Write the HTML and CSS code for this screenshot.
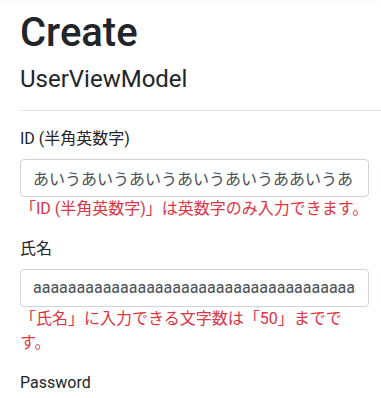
FILE: index.html
```html
<!DOCTYPE html>
<html lang="ja">
<head>
  <meta charset="UTF-8" />
  <meta name="viewport" content="width=device-width, initial-scale=1.0" />
  <title>Create - UserViewModel</title>
  <link rel="stylesheet" href="styles.css">
</head>
<body>

<div class="nav-shadow"></div>

<main class="container">
  <h1>Create</h1>
  <h4>UserViewModel</h4>
  <hr />

  <form class="user-form">
    <div class="form-group">
      <label class="control-label" for="UserId">ID (半角英数字)</label>
      <input class="form-control" id="UserId" type="text" value="あいうあいうあいうあいうあいうああいうあ" />
      <span class="text-danger">「ID (半角英数字)」は英数字のみ入力できます。</span>
    </div>

    <div class="form-group">
      <label class="control-label" for="Name">氏名</label>
      <input class="form-control" id="Name" type="text" value="aaaaaaaaaaaaaaaaaaaaaaaaaaaaaaaaaaaaaaaaaaaaaaaaaaaa" />
      <span class="text-danger">「氏名」に入力できる文字数は「50」までです。</span>
    </div>

    <div class="form-group">
      <label class="control-label" for="Password">Password</label>
      <input class="form-control" id="Password" type="password" />
    </div>
  </form>
</main>

</body>
</html>
```

FILE: styles.css
```css
html, body {
  margin: 0;
  padding: 0;
}
body {
  background: #fff;
  color: #212529;
  font-family: Roboto, "Noto Sans CJK JP", sans-serif;
  font-size: 16px;
  line-height: 1.5;
}
.nav-shadow {
  height: 0;
  box-shadow: 0 0 4px 1px rgba(0, 0, 0, .04);
}
.container {
  padding: 9px 0 0 20px;
}
h1, h4 {
  margin: 0 0 8px;
  font-weight: 400;
  line-height: 1.2;
}
h1 {
  font-size: 40px;
  font-weight: 500;
}
h4 {
  font-size: 24px;
}
hr {
  margin: 16px 0;
  border: 0;
  border-top: 1px solid rgba(0, 0, 0, .1);
}
.user-form {
  width: 349px;
}
.form-group {
  margin-bottom: 16px;
}
.control-label {
  display: inline-block;
  margin-bottom: 8px;
}
.form-control {
  display: block;
  width: 100%;
  height: 38px;
  box-sizing: border-box;
  padding: 6px 12px;
  margin: 0;
  font-family: inherit;
  font-size: 16px;
  line-height: 1.5;
  color: #495057;
  background: #fff;
  border: 1px solid #ced4da;
  border-radius: 4px;
}
.text-danger {
  color: #dc3545;
}
```
